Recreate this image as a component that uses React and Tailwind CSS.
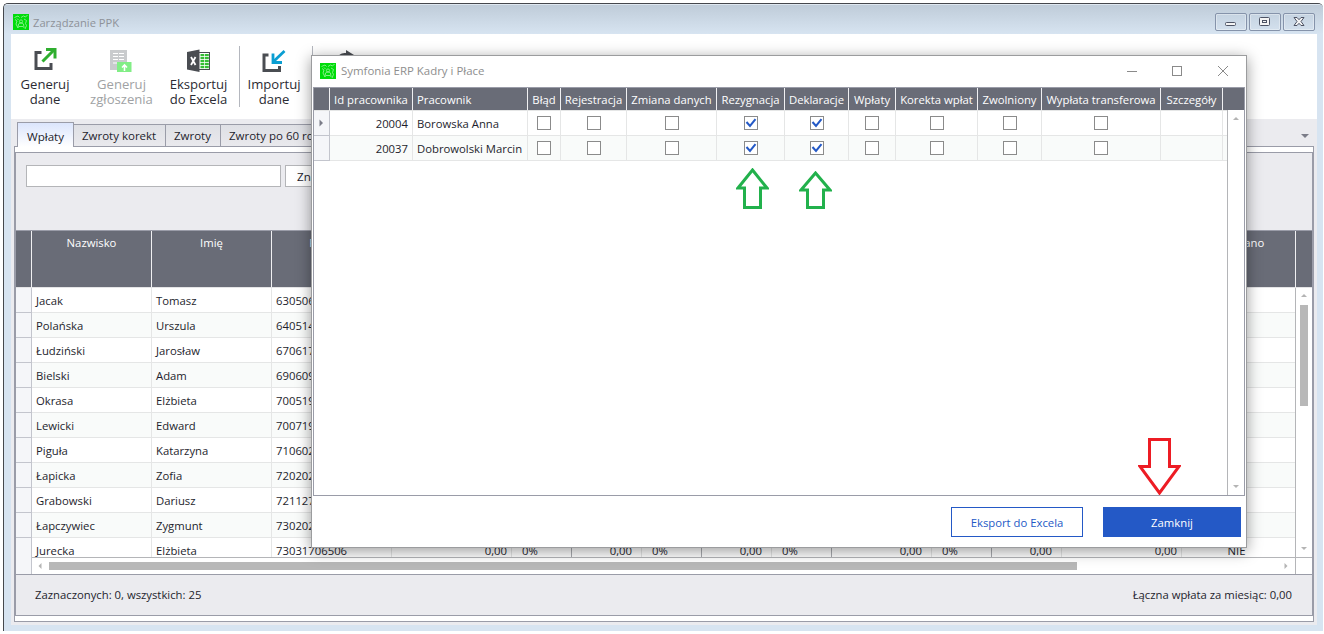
import React from "react";
import clsx from "clsx";

const employees = [
  { lastName: "Jacak", firstName: "Tomasz", pesel: "63050611873" },
  { lastName: "Polańska", firstName: "Urszula", pesel: "64051412345" },
  { lastName: "Łudziński", firstName: "Jarosław", pesel: "67061709871" },
  { lastName: "Bielski", firstName: "Adam", pesel: "69060911234" },
  { lastName: "Okrasa", firstName: "Elżbieta", pesel: "70051903421" },
  { lastName: "Lewicki", firstName: "Edward", pesel: "70071908765" },
  { lastName: "Piguła", firstName: "Katarzyna", pesel: "71060204567" },
  { lastName: "Łapicka", firstName: "Zofia", pesel: "72020203456" },
  { lastName: "Grabowski", firstName: "Dariusz", pesel: "72112705678" },
  { lastName: "Łapczywiec", firstName: "Zygmunt", pesel: "73020204321" },
  { lastName: "Jurecka", firstName: "Elżbieta", pesel: "73031706506" },
];

const mainColumns = [
  { key: "lastName", label: "Nazwisko", width: "w-[120px]" },
  { key: "firstName", label: "Imię", width: "w-[120px]" },
  { key: "pesel", label: "PESEL", width: "w-[120px]", labelPad: "pr-[13px]" },
  { value: "0,00", width: "w-[120px]", align: "text-right" },
  { value: "0%", width: "w-[60px]", align: "pl-[10px]", dark: true },
  { value: "0,00", width: "w-[70px]", align: "text-right pr-[9px]" },
  { value: "0%", width: "w-[60px]", align: "pl-[10px]", dark: true },
  { value: "0,00", width: "w-[70px]", align: "text-right pr-[9px]" },
  { value: "0%", width: "w-[60px]", align: "pl-[10px]", dark: true },
  { value: "0,00", width: "w-[100px]", align: "text-right pr-[9px]" },
  { value: "0%", width: "w-[60px]", align: "pl-[10px]", dark: true },
  { value: "0,00", width: "w-[70px]", align: "text-right pr-[9px]" },
  { value: "0,00", width: "w-[120px]", align: "text-right" },
  { value: "NIE", label: "Przekazano", width: "w-[114px]", labelPad: "pr-[9px]", align: "text-center pr-[9px]", last: true },
];

const dialogColumns = [
  { label: "Id pracownika", width: "w-[83px]", key: "id" },
  { label: "Pracownik", width: "w-[115px]", key: "name" },
  { label: "Błąd", width: "w-[33px]" },
  { label: "Rejestracja", width: "w-[66px]" },
  { label: "Zmiana danych", width: "w-[90px]" },
  { label: "Rezygnacja", width: "w-[68px]", checked: true },
  { label: "Deklaracje", width: "w-[64px]", checked: true },
  { label: "Wpłaty", width: "w-[47px]" },
  { label: "Korekta wpłat", width: "w-[82px]" },
  { label: "Zwolniony", width: "w-[64px]" },
  { label: "Wypłata transferowa", width: "w-[119px]" },
  { label: "Szczegóły", width: "w-[62px]", key: "details" },
];

const dialogRows = [
  { id: "20004", name: "Borowska Anna", details: "" },
  { id: "20037", name: "Dobrowolski Marcin", details: "" },
];

const AppIcon = () => (
  <svg width="16" height="16" viewBox="0 0 16 16" className="shrink-0">
    <rect width="16" height="16" fill="#00dc0a" />
    <g fill="none" stroke="#8ef091" strokeWidth="0.9">
      <path d="M1.500 3.500L5 2l1.500 1.500M8 3.500L10.500 2l2 1L14.500 1M2 5.500l2 1.500-1 3 2 4M4 4.500L5.500 6M11 5l2.500 1.500-1 3 1 2-1.500 3.500" />
      <circle cx="8" cy="7.500" r="1.600" />
      <path d="M5 14l.5-4L7 9h2l1.500 1 .5 4M6 12.500h4" />
    </g>
  </svg>
);

const Triangle = ({ dir, className }) => {
  const shapes = {
    up: "M0 4h6L3 1z",
    down: "M0 2h6L3 5z",
    left: "M4.500 0v6L1.500 3z",
    right: "M1.500 0v6l3-3z",
  };
  return (
    <svg width="6" height="6" viewBox="0 0 6 6" fill="currentColor" className={className}>
      <path d={shapes[dir]} />
    </svg>
  );
};

const GenerateIcon = () => (
  <svg width="24" height="24" viewBox="0 0 24 24" fill="none">
    <path d="M8.500 4.500H3v16h15v-5.500" stroke="#4a4d52" strokeWidth="3" />
    <path d="M9.500 13.500L20.500 2.500" stroke="#2fae2f" strokeWidth="3" />
    <path d="M13 1.500h9v9" stroke="#2fae2f" strokeWidth="3" />
  </svg>
);

const ReportIcon = () => (
  <svg width="24" height="24" viewBox="0 0 24 24">
    <path d="M0 2h17v12H8v8H0z" fill="#c9cbcd" />
    <path d="M3 5.500h11M3 8.500h11M3 11.500h11M3 15h4" stroke="#fff" strokeWidth="1.200" />
    <path d="M8.500 5v7" stroke="#c9cbcd" strokeWidth="1" />
    <rect x="7" y="14" width="14.500" height="10" fill="#82ee86" />
    <path d="M14.500 23v-6M12 19.500l2.500-2.500 2.500 2.500" stroke="#fff" strokeWidth="1.600" fill="none" />
  </svg>
);

const ExcelIcon = () => (
  <svg width="24" height="24" viewBox="0 0 24 24">
    <rect x="11.500" y="4.500" width="11" height="17" fill="#fff" stroke="#4a4d52" />
    <g fill="#35bd35">
      {[6, 9, 12, 15, 18].map((y) => (
        <React.Fragment key={y}>
          <rect x="13.500" y={y} width="3.800" height="2.200" />
          <rect x="18" y={y} width="3.800" height="2.200" />
        </React.Fragment>
      ))}
    </g>
    <path d="M0 4l12.500-2.500v22.500L0 21.500z" fill="#4a4d52" />
    <path d="M4 9l4.500 8M8.500 9L4 17" stroke="#fff" strokeWidth="1.800" />
  </svg>
);

const ImportIcon = () => (
  <svg width="24" height="24" viewBox="0 0 24 24" fill="none">
    <path d="M6.500 7H2v15.500h15.500V18" stroke="#4a4d52" strokeWidth="3" />
    <path d="M22.500 3L11 14" stroke="#0a9ed2" strokeWidth="2.800" />
    <path d="M11 5.500v9h9" stroke="#0a9ed2" strokeWidth="2.800" />
  </svg>
);

const RibbonButton = ({ icon, lines, width, disabled }) => (
  <div className={clsx("flex flex-col items-center", width, disabled ? "text-[#a0a2a4]" : "text-[#2b2b33]")}>
    {icon}
    <div className="mt-[5px] text-center text-[13.1px] leading-[15px] whitespace-nowrap">
      {lines.map((line) => (
        <div key={line}>{line}</div>
      ))}
    </div>
  </div>
);

const Ribbon = () => (
  <div className="flex h-[85px] shrink-0 bg-white pt-[12px]">
    <div className="flex pt-[2px]">
      <RibbonButton width="w-[68px]" icon={<GenerateIcon />} lines={["Generuj", "dane"]} />
      <RibbonButton width="w-[85px]" icon={<ReportIcon />} lines={["Generuj", "zgłoszenia"]} disabled />
      <RibbonButton width="w-[69px]" icon={<ExcelIcon />} lines={["Eksportuj", "do Excela"]} />
    </div>
    <div className="ml-[6px] h-[61px] w-px bg-[#b4b7be]" />
    <div className="pt-[2px]">
      <RibbonButton width="w-[68px]" icon={<ImportIcon />} lines={["Importuj", "dane"]} />
    </div>
    <div className="ml-[4px] h-[61px] w-px bg-[#b4b7be]" />
    <svg width="24" height="24" viewBox="0 0 24 24" className="mt-[3px] ml-[22px]">
      <path d="M2 9c2-4 5-5 9-5V1l8 5-8 5V8c-4 0-6 0-9 1z" fill="#4a4d52" />
    </svg>
  </div>
);

const Tabs = () => (
  <div className="flex h-[27px] shrink-0 items-end pl-[6px]">
    <div className="z-10 -mb-px flex h-[25px] w-[57px] items-center justify-center border border-b-0 border-[#9a9ca8] bg-linear-to-b from-[#dbe5fc] to-white pt-[3px] text-[11.6px]">
      Wpłaty
    </div>
    {[
      { label: "Zwroty korekt", width: "w-[92px]" },
      { label: "Zwroty", width: "w-[55px]" },
      { label: "Zwroty po 60 roku życia", width: "w-[155px]" },
    ].map((tab) => (
      <div
        key={tab.label}
        className={clsx(
          "flex h-[22px] items-center border-t border-r border-[#9a9ca8] bg-linear-to-b from-[#dfe0e5] to-[#e9e9ed] pt-px pl-[8px] text-[11.5px] whitespace-nowrap",
          tab.width
        )}
      >
        {tab.label}
      </div>
    ))}
    <svg width="8" height="4" viewBox="0 0 8 4" className="mr-[8px] mb-[8px] ml-auto">
      <path d="M0 0h8L4 4z" fill="#7b7c88" />
    </svg>
  </div>
);

const MainTable = () => (
  <div className="flex h-[345px] shrink-0 flex-col border-y border-[#9a9ca8] bg-white">
    <div className="flex h-[57px] shrink-0 border-b border-[#e4e4e6] bg-[#696c77] text-white">
      <div className="w-[16px] shrink-0 border-r border-[#f0f0f2]" />
      {mainColumns.map((col, i) => (
        <div
          key={i}
          className={clsx("shrink-0 border-r border-[#f0f0f2] pt-[4px] text-center", col.width, col.labelPad)}
        >
          {col.label}
        </div>
      ))}
    </div>
    <div className="flex h-[286px]">
      <div className="flex w-[1279px] flex-col">
        <div className="h-[269px] shrink-0 overflow-hidden">
          {employees.map((row, i) => (
            <div key={row.pesel} className={clsx("flex h-[25px] leading-[25px]", i % 2 ? "bg-[#f9fbfa]" : "bg-white")}>
              <div className="w-[16px] shrink-0 border-r border-b border-[#c3c5cd] bg-[#f5f6f9]" />
              {mainColumns.map((col, j) => (
                <div
                  key={j}
                  className={clsx(
                    "shrink-0 border-b border-b-[#e5e6e6] px-[4px]",
                    col.width,
                    col.align,
                    !col.last && "border-r",
                    col.dark ? "border-r-[#a9abb0]" : "border-r-[#e5e6e6]"
                  )}
                >
                  {col.key ? row[col.key] : col.value}
                </div>
              ))}
            </div>
          ))}
        </div>
        <div className="flex h-[17px]">
          <div className="w-[16px] border-r border-[#c3c5cd] bg-[#f5f6f9]" />
          <div className="flex flex-1 items-center border-t border-[#b4b5b8] pl-[5px] text-[#b4b4b4]">
            <Triangle dir="left" />
            <div className="ml-[6px] h-[8px] w-[1028px] bg-[#b8b8b8]" />
            <Triangle dir="right" className="mr-[6px] ml-auto" />
          </div>
        </div>
      </div>
      <div className="flex w-[18px] flex-col border-l border-[#b4b5b8] text-[#b4b4b4]">
        <div className="flex h-[270px] flex-col items-center border-b border-[#b4b5b8] pt-[5px] pr-px pb-[6px]">
          <Triangle dir="up" />
          <div className="mt-[6px] h-[101px] w-[8px] bg-[#b8b8b8]" />
          <Triangle dir="down" className="mt-auto" />
        </div>
      </div>
    </div>
  </div>
);

const Checkbox = ({ checked }) => (
  <div className="flex h-[14px] w-[14px] items-center justify-center border border-[#8b8b8b] bg-white">
    {checked && (
      <svg width="12" height="12" viewBox="0 0 12 12" fill="none">
        <path d="M1.500 5l3.500 4 5.500-6.800" stroke="#2459c6" strokeWidth="2" />
      </svg>
    )}
  </div>
);

const DialogTable = () => (
  <div className="flex h-[409px] w-[932px] flex-col border border-[#9a9ca8]">
    <div className="flex h-[22px] shrink-0 bg-[#696c77] leading-[24px] text-white">
      <div className="w-[16px] shrink-0 border-r border-[#f0f0f2]" />
      {dialogColumns.map((col) => (
        <div
          key={col.label}
          className={clsx(
            "flex shrink-0 border-r border-[#f0f0f2] whitespace-nowrap",
            col.width,
            col.key === "name" ? "justify-start pl-[4px]" : "justify-center"
          )}
        >
          {col.label}
        </div>
      ))}
    </div>
    <div className="flex flex-1">
      <div className="w-[913px]">
        {dialogRows.map((row, i) => (
          <div
            key={row.id}
            className={clsx("flex", i === 0 ? "h-[26px] border-t border-[#e5e6e6] bg-white" : "h-[25px] bg-[#f9fbfa]")}
          >
            <div className="flex w-[16px] shrink-0 items-center justify-center border-r border-b border-[#c3c5cd] bg-[#f5f6f9] text-[#7b7c88]">
              {i === 0 && (
                <svg width="5" height="8" viewBox="0 0 5 8" fill="currentColor">
                  <path d="M0.500 0.500v7l3.500-3.500z" />
                </svg>
              )}
            </div>
            {dialogColumns.map((col) => (
              <div
                key={col.label}
                className={clsx(
                  "flex shrink-0 items-center border-r border-b border-[#e5e6e6]",
                  col.width,
                  col.key === "id" && "justify-end pt-[2px] pr-[4px]",
                  col.key === "name" && "pt-[2px] pl-[4px] whitespace-nowrap",
                  !col.key && "justify-center"
                )}
              >
                {col.key ? row[col.key] : <Checkbox checked={col.checked} />}
              </div>
            ))}
            <div className="flex-1 border-b border-[#e5e6e6]" />
          </div>
        ))}
      </div>
      <div className="flex w-[17px] flex-col items-center justify-between border-l border-[#b4b5b8] pt-[6px] pb-[6px] text-[#b4b4b4]">
        <Triangle dir="up" />
        <Triangle dir="down" />
      </div>
    </div>
  </div>
);

const Dialog = () => (
  <div className="absolute top-[55px] left-[311px] z-20 flex h-[493px] w-[936px] flex-col border border-[#9b9c9e] bg-white px-px shadow-[0_3px_14px_rgba(0,0,0,0.4)]">
    <div className="flex h-[31px] shrink-0 items-center pb-px pl-[7px] text-[#8e8e8e]">
      <AppIcon />
      <span className="ml-[5px] text-[11.45px]">Symfonia ERP Kadry i Płace</span>
      <svg width="104" height="12" viewBox="0 0 104 12" fill="none" stroke="#8a8a8a" className="mr-[15px] ml-auto">
        <path d="M1 6.500h10" />
        <rect x="46.500" y="1.500" width="9" height="9" />
        <path d="M92 1l10 10M102 1l-10 10" />
      </svg>
    </div>
    <DialogTable />
    <div className="flex flex-1 justify-end gap-[20px] pt-[11px] pr-[4px]">
      <button className="h-[30px] w-[132px] border border-[#2459c6] bg-white pt-[2px] text-[#2459c6]">Eksport do Excela</button>
      <button className="h-[30px] w-[138px] bg-[#2459c6] pt-[2px] text-white">Zamknij</button>
    </div>
  </div>
);

const WindowButton = ({ children }) => (
  <div className="flex h-[18px] w-[32px] items-center justify-center rounded-[2px] border border-[#8593aa] bg-linear-to-b from-[#c5d3e1] to-[#d3e0ed] shadow-[inset_0_0_0_1px_rgba(255,255,255,0.35)]">
    <svg width="12" height="12" viewBox="0 0 12 12" fill="#f4f4f4" stroke="#4d5364">
      {children}
    </svg>
  </div>
);

const TitleBar = () => (
  <div className="flex h-[30px] shrink-0 items-start border-t border-[#dfe8f1] bg-linear-to-b from-[#bfccd9] to-[#d7e4f1] pt-[9px] pr-[8px] pl-[9px]">
    <AppIcon />
    <span className="ml-[4px] text-[11.2px] leading-[18px] text-[#8e9299]">Zarządzanie PPK</span>
    <div className="-mt-px ml-auto flex gap-[2px]">
      <WindowButton>
        <rect x="0.500" y="6.500" width="10" height="3" rx="1" />
      </WindowButton>
      <WindowButton>
        <rect x="0.500" y="1.500" width="10" height="8" rx="1" />
        <rect x="3.500" y="4.500" width="4" height="2" />
      </WindowButton>
      <WindowButton>
        <path d="M1 1.500h3l2 2.200 2-2.200h3L8 5.500l3 4H8L6 7.300 4 9.500H1l3-4z" />
      </WindowButton>
    </div>
  </div>
);

// hint arrows drawn over the dialog
const HintArrow = ({ className, width, height, color, d }) => (
  <svg width={width} height={height} viewBox={`0 0 ${width} ${height}`} fill="none" stroke={color} strokeWidth="3" className={clsx("absolute z-30", className)}>
    <path d={d} />
  </svg>
);

const App = () => {
  return (
    <div className="relative h-[634px] w-[1324px] overflow-hidden bg-white pt-[3px] pl-[3px] font-['Open_Sans','Noto_Sans',sans-serif] text-[11.3px] text-[#1e1e2d]">
      <div className="flex h-[628px] w-[1320px] flex-col overflow-hidden rounded-t-[5px] border-t border-l border-[#45484d] bg-[#d7e4f1]">
        <TitleBar />
        <div className="mr-[6px] ml-[7px] flex h-[591px] flex-col bg-[#ebebef]">
          <Ribbon />
          <Tabs />
          <div className="mr-[3px] ml-[3px] flex h-[476px] flex-col border border-[#9a9ca8] bg-white py-[5px]">
            <div className="flex h-[464px] flex-col border border-[#9a9ca8] bg-[#ebebef]">
              <div className="flex h-[77px] shrink-0 gap-[4px] pt-[12px] pl-[10px]">
                <div className="h-[22px] w-[255px] border border-[#b4b5b8] bg-white" />
                <div className="h-[22px] w-[80px] border border-[#b4b5b8] bg-white pl-[11px] text-[11.6px] leading-[22px]">Znajdź</div>
              </div>
              <MainTable />
              <div className="flex flex-1 items-center justify-between pr-[20px] pl-[19px]">
                <span>Zaznaczonych: 0, wszystkich: 25</span>
                <span>Łączna wpłata za miesiąc: 0,00</span>
              </div>
            </div>
          </div>
        </div>
      </div>
      <Dialog />
      <HintArrow className="top-[168px] left-[736px]" width={33} height={41} color="#22b14c" d="M16.500 2L31 20h-6.500v19.500h-16V20H2z" />
      <HintArrow className="top-[171px] left-[799px]" width={33} height={38} color="#22b14c" d="M16.500 2L31 19h-6.500v17.500h-16V19H2z" />
      <HintArrow className="top-[438px] left-[1138px]" width={43} height={57} color="#ed1c24" d="M11.500 1.500h20v27H41L21.500 55 2 28.500h9.500z" />
    </div>
  );
};

export default App;
